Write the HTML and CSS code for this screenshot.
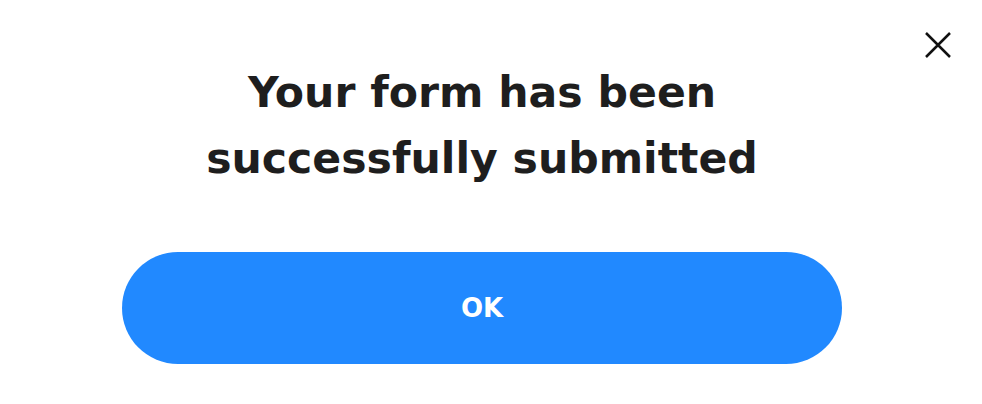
FILE: index.html
```html
<!DOCTYPE html>
<html>
<head>
<meta charset="utf-8">
<link rel="stylesheet" href="styles.css">
</head>
<body>
<div class="dialog">
  <button class="close" aria-label="Close">
    <svg width="28" height="28" viewBox="0 0 28 28"><path d="M2 2 L26 26 M26 2 L2 26" stroke="#111" stroke-width="2.5" fill="none"/></svg>
  </button>
  <h1 class="title">Your form has been<br>successfully submitted</h1>
  <button class="ok">OK</button>
</div>
</body>
</html>
```
FILE: styles.css
```css
html, body { margin: 0; padding: 0; background: #fff; }
.dialog {
  position: relative;
  width: 982px;
  height: 404px;
  box-sizing: border-box;
  padding: 59px 140px 0 122px;
  display: flex;
  flex-direction: column;
  align-items: center;
  font-family: "DejaVu Sans", Inter, sans-serif;
}
.close {
  position: absolute;
  top: 31px;
  left: 924px;
  width: 28px;
  height: 28px;
  padding: 0;
  border: 0;
  background: none;
  display: flex;
}
.title {
  margin: 0;
  text-align: center;
  font-size: 42.6px;
  line-height: 66px;
  font-weight: 700;
  color: #1e1e1e;
}
.ok {
  margin-top: 61px;
  width: 720px;
  height: 112px;
  border: 0;
  border-radius: 56px;
  background: #2189ff;
  color: #fff;
  font-family: "DejaVu Sans", Inter, sans-serif;
  font-weight: 700;
  font-size: 26px;
}
```
